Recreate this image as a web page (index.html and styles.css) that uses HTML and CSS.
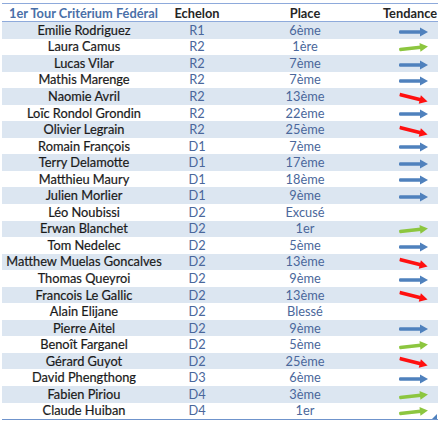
FILE: index.html
```html
<!DOCTYPE html>
<html lang="fr">
<head>
<meta charset="utf-8">
<title>1er Tour Critérium Fédéral</title>
<link rel="stylesheet" href="styles.css">
</head>
<body>
<div class="sheet">
<table class="results">
<colgroup>
<col class="c-name"><col class="c-ech"><col class="c-place"><col class="c-trend">
</colgroup>
<thead>
<tr><th class="title">1er Tour Critérium Fédéral</th><th>Echelon</th><th>Place</th><th>Tendance</th></tr>
</thead>
<tbody id="rows"></tbody>
</table>
<svg class="handle" width="5" height="5" viewBox="0 0 5 5"><polygon points="5,0 5,5 0,5" fill="#4f81bd"/></svg>
</div>
<script>
var data = [
["Emilie Rodriguez","R1","6ème","flat"],
["Laura Camus","R2","1ère","up"],
["Lucas Vilar","R2","7ème","flat"],
["Mathis Marenge","R2","7ème","flat"],
["Naomie Avril","R2","13ème","down"],
["Loïc Rondol Grondin","R2","22ème","flat"],
["Olivier Legrain","R2","25ème","down"],
["Romain François","D1","7ème","flat"],
["Terry Delamotte","D1","17ème","flat"],
["Matthieu Maury","D1","18ème","flat"],
["Julien Morlier","D1","9ème","flat"],
["Léo Noubissi","D2","Excusé",""],
["Erwan Blanchet","D2","1er","up"],
["Tom Nedelec","D2","5ème","flat"],
["Matthew Muelas Goncalves","D2","13ème","down"],
["Thomas Queyroi","D2","9ème","flat"],
["Francois Le Gallic","D2","13ème","down"],
["Alain Elijane","D2","Blessé",""],
["Pierre Aitel","D2","9ème","flat"],
["Benoît Farganel","D2","5ème","up"],
["Gérard Guyot","D2","25ème","down"],
["David Phengthong","D3","6ème","flat"],
["Fabien Piriou","D4","3ème","up"],
["Claude Huiban","D4","1er","up"]
];
var arrow = '<svg class="arrow" width="30" height="10" viewBox="0 0 30 10"><rect x="0" y="3.2" width="23" height="3.6" rx="1.2"/><polygon points="21,0.6 29,5 21,9.4"/></svg>';
var html = "";
data.forEach(function (r) {
  html += '<tr><td class="name">' + r[0] + '</td><td class="val">' + r[1] + '</td><td class="val">' + r[2] + '</td><td class="trend">' +
    (r[3] ? '<span class="t t-' + r[3] + '">' + arrow + '</span>' : '') + '</td></tr>';
});
document.getElementById("rows").innerHTML = html;
</script>
</body>
</html>
```
FILE: styles.css
```css
html, body {
  margin: 0;
  padding: 0;
  background: #ffffff;
}
.sheet {
  position: relative;
  padding: 3px 3px 0 2px;
  width: 436px;
}
.results {
  width: 436px;
  table-layout: fixed;
  border-collapse: collapse;
  font-family: Lato, "Open Sans", sans-serif;
  font-size: 12.8px;
  border-top: 1px solid #8eaadb;
  border-bottom: 1px solid #6f94cc;
}
.c-name { width: 164px; }
.c-ech { width: 62px; }
.c-place { width: 154px; }
.c-trend { width: 56px; }
th {
  height: 17px;
  padding: 0;
  font-weight: bold;
  color: #262626;
  text-align: center;
  border-bottom: 1px solid #8eaadb;
  line-height: 16px;
  white-space: nowrap;
}
th.title {
  text-align: left;
  padding-left: 7px;
  color: #4a70a8;
}
td {
  height: 16.55px;
  padding: 0;
  line-height: 15px;
  text-align: center;
  white-space: nowrap;
}
tbody tr:nth-child(odd) td {
  background: #dce6f1;
}
td.name {
  color: #1a1a1a;
  -webkit-text-stroke: 0.2px #1a1a1a;
}
td.val {
  color: #4a679b;
}
td.trend {
  text-align: left;
  padding-left: 17px;
}
.t {
  display: inline-block;
  vertical-align: middle;
  line-height: 0;
}
.t-flat { fill: #4f81bd; }
.t-up { fill: #8cc63f; transform: rotate(-6deg); }
.t-down { fill: #ff1010; transform: rotate(14deg); }
.arrow { display: block; }
.handle {
  position: absolute;
  right: 4px;
  bottom: 1px;
}
```
